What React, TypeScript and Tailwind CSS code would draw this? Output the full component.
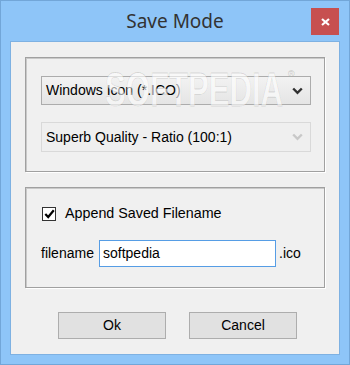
import React from "react";

const font = { fontFamily: '"Liberation Sans", Arial, sans-serif' };

function Chevron({ color }: { color: string }) {
  return (
    <svg width="11" height="8" viewBox="0 0 11 8" className="shrink-0">
      <polyline points="1.2,1.5 5.5,5.8 9.8,1.5" fill="none" stroke={color} strokeWidth="2.4" />
    </svg>
  );
}

export default function App() {
  return (
    <div
      className="w-[350px] h-[365px] overflow-hidden bg-[#8ec5f8] border border-[#72a6d8] flex flex-col text-[14px] text-black"
      style={font}
    >
      {/* title bar */}
      <div className="h-[40px] grid grid-cols-[1fr_auto_1fr]">
        <div />
        <div
          className="self-center pt-[1px] text-[19px] text-[#333333] leading-none"
          style={{ fontFamily: '"Noto Sans", "Open Sans", sans-serif' }}
        >
          Save Mode
        </div>
        <div className="flex justify-end items-start">
          <button className="mt-[7px] mr-[10px] w-[28px] h-[27px] bg-[#c75050] flex items-center justify-center">
            <svg width="9" height="8" viewBox="0 0 9 8">
              <path d="M1 1 L8 7 M8 1 L1 7" stroke="#ffffff" strokeWidth="2.2" />
            </svg>
          </button>
        </div>
      </div>

      {/* client area */}
      <div className="mx-[9px] h-[314px] border border-[#7eb1e2] bg-[#f0f0f0] pl-[14px] pt-[15px] flex flex-col">
        {/* group 1 */}
        <div className="relative w-[300px] h-[115px] border border-[#a0a0a0] shadow-[1px_1px_0_#ffffff,inset_1px_1px_0_#c9c9c9] pl-[15px] pt-[18px] flex flex-col gap-[17px]">
          <div className="w-[270px] h-[29px] border border-[#acacac] bg-gradient-to-b from-[#f2f2f2] to-[#e5e5e5] flex items-center justify-between pl-[4px] pr-[7px]">
            <span>Windows Icon (*.ICO)</span>
            <Chevron color="#303030" />
          </div>
          <div className="w-[270px] h-[30px] border border-[#d9d9d9] bg-[#efefef] flex items-center justify-between pl-[4px] pr-[7px]">
            <span>Superb Quality - Ratio (100:1)</span>
            <Chevron color="#c8c8c8" />
          </div>
          {/* watermark */}
          <svg
            className="absolute left-[78px] top-[9px] pointer-events-none"
            width="196"
            height="42"
            viewBox="0 0 196 42"
          >
            <text
              x="1"
              y="39"
              fontSize="48"
              fontWeight="bold"
              fontFamily='"Liberation Sans", Arial, sans-serif'
              textLength="178"
              lengthAdjust="spacingAndGlyphs"
              fill="rgba(255,255,255,0.6)"
              stroke="rgba(0,0,0,0.13)"
              strokeWidth="0.8"
            >
              SOFTPEDIA
            </text>
            <text x="184" y="10" fontSize="9" fill="rgba(255,255,255,0.7)" stroke="rgba(0,0,0,0.15)" strokeWidth="0.4">
              ®
            </text>
          </svg>
        </div>

        {/* group 2 */}
        <div className="mt-[15px] w-[300px] h-[101px] border border-[#a0a0a0] shadow-[1px_1px_0_#ffffff,inset_1px_1px_0_#c9c9c9] pt-[19px] flex flex-col">
          <div className="pl-[16px] flex items-center h-[14px]">
            <div className="w-[14px] h-[14px] border border-[#333333] bg-white flex items-center justify-center">
              <svg width="11" height="10" viewBox="0 0 11 10">
                <polyline points="1.3,5 4.2,8 9.8,1.2" fill="none" stroke="#000000" strokeWidth="2.2" />
              </svg>
            </div>
            <span className="ml-[9px] text-[14.3px]">Append Saved Filename</span>
          </div>
          <div className="mt-[19px] pl-[15px] flex items-center">
            <span className="w-[58px]">filename</span>
            <div className="w-[177px] h-[27px] border border-[#569de5] bg-white flex items-center pl-[3px]">
              softpedia
            </div>
            <span className="ml-[3px]">.ico</span>
          </div>
        </div>

        {/* buttons */}
        <div className="mt-[24px] pl-[33px] flex gap-[23px]">
          <button className="w-[108px] h-[27px] border border-[#adadad] bg-[#e1e1e1] flex items-center justify-center">
            Ok
          </button>
          <button className="w-[108px] h-[27px] border border-[#adadad] bg-[#e1e1e1] flex items-center justify-center">
            Cancel
          </button>
        </div>
      </div>
    </div>
  );
}
